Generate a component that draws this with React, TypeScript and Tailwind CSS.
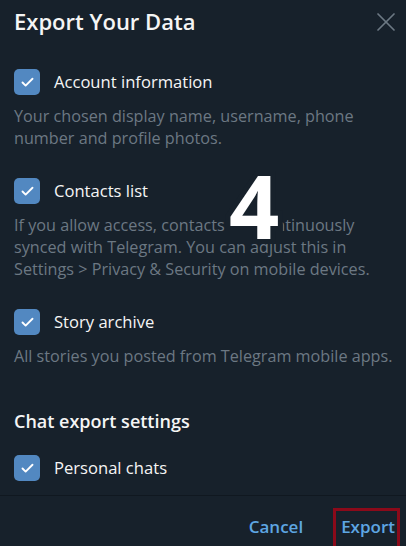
import { Check, X } from "lucide-react";

type ExportOption = {
  label: string;
  description?: string;
};

const dataOptions: ExportOption[] = [
  {
    label: "Account information",
    description: "Your chosen display name, username, phone number and profile photos.",
  },
  {
    label: "Contacts list",
    description:
      "If you allow access, contacts are continuously synced with Telegram. You can adjust this in Settings > Privacy & Security on mobile devices.",
  },
  {
    label: "Story archive",
    description: "All stories you posted from Telegram mobile apps.",
  },
];

function Checkbox() {
  return (
    <span className="flex h-[26px] w-[26px] shrink-0 items-center justify-center rounded-[5px] bg-[#5288c1]">
      <Check className="h-[15px] w-[15px] text-white" strokeWidth={3} />
    </span>
  );
}

function OptionRow({ option }: { option: ExportOption }) {
  return (
    <div>
      <div className="flex items-center gap-[14px]">
        <Checkbox />
        <span className="text-[16.6px] leading-[26px] text-[#f5f5f5]">{option.label}</span>
      </div>
      {option.description && (
        <p className="mt-[10px] text-[16.2px] leading-[22px] text-[#6c7883]">
          {option.description}
        </p>
      )}
    </div>
  );
}

export default function App() {
  return (
    <main
      className="relative flex h-[546px] w-[406px] flex-col overflow-hidden bg-[#17212b]"
      style={{ fontFamily: '"Open Sans", "Noto Sans", sans-serif' }}
    >
      <div className="flex h-[38px] shrink-0 items-end justify-between pl-[14px] pr-[4px] pt-[6px]">
        <h1 className="pb-[2px] text-[22px] font-semibold leading-[30px] text-[#f5f5f5]">Export Your Data</h1>
        <X className="h-[32px] w-[32px] text-[#6c7883]" strokeWidth={1.3} />
      </div>

      <div className="min-h-0 flex-1 pl-[14px] pr-[6px] pt-[31px]">
        <div className="flex flex-col gap-[29px]">
          {dataOptions.map((option) => (
            <OptionRow key={option.label} option={option} />
          ))}
        </div>

        <h2 className="mt-[42px] text-[18px] font-semibold leading-[24px] text-[#f5f5f5]">
          Chat export settings
        </h2>

        <div className="mt-[22px]">
          <OptionRow option={{ label: "Personal chats" }} />
        </div>
      </div>

      <div className="flex h-[51px] shrink-0 items-end justify-end gap-[38px] border-t border-[#101820] pb-[6px] pr-[11px]">
        <button className="text-[17px] font-semibold leading-[26px] text-[#5ea6e3]">Cancel</button>
        <span className="relative">
          <button className="text-[17px] font-semibold leading-[26px] text-[#5ea6e3]">Export</button>
          <span className="absolute -left-[8px] -right-[5px] -top-[6px] -bottom-[20px] border-[3px] border-[#8b0a1a]" />
        </span>
      </div>

      {/* step annotation */}
      <span
        className="pointer-events-none absolute left-[229px] top-[161px] text-[88px] font-bold leading-none text-white"
        style={{ WebkitTextStroke: "10px #17212b", paintOrder: "stroke fill" }}
      >
        4
      </span>
    </main>
  );
}
